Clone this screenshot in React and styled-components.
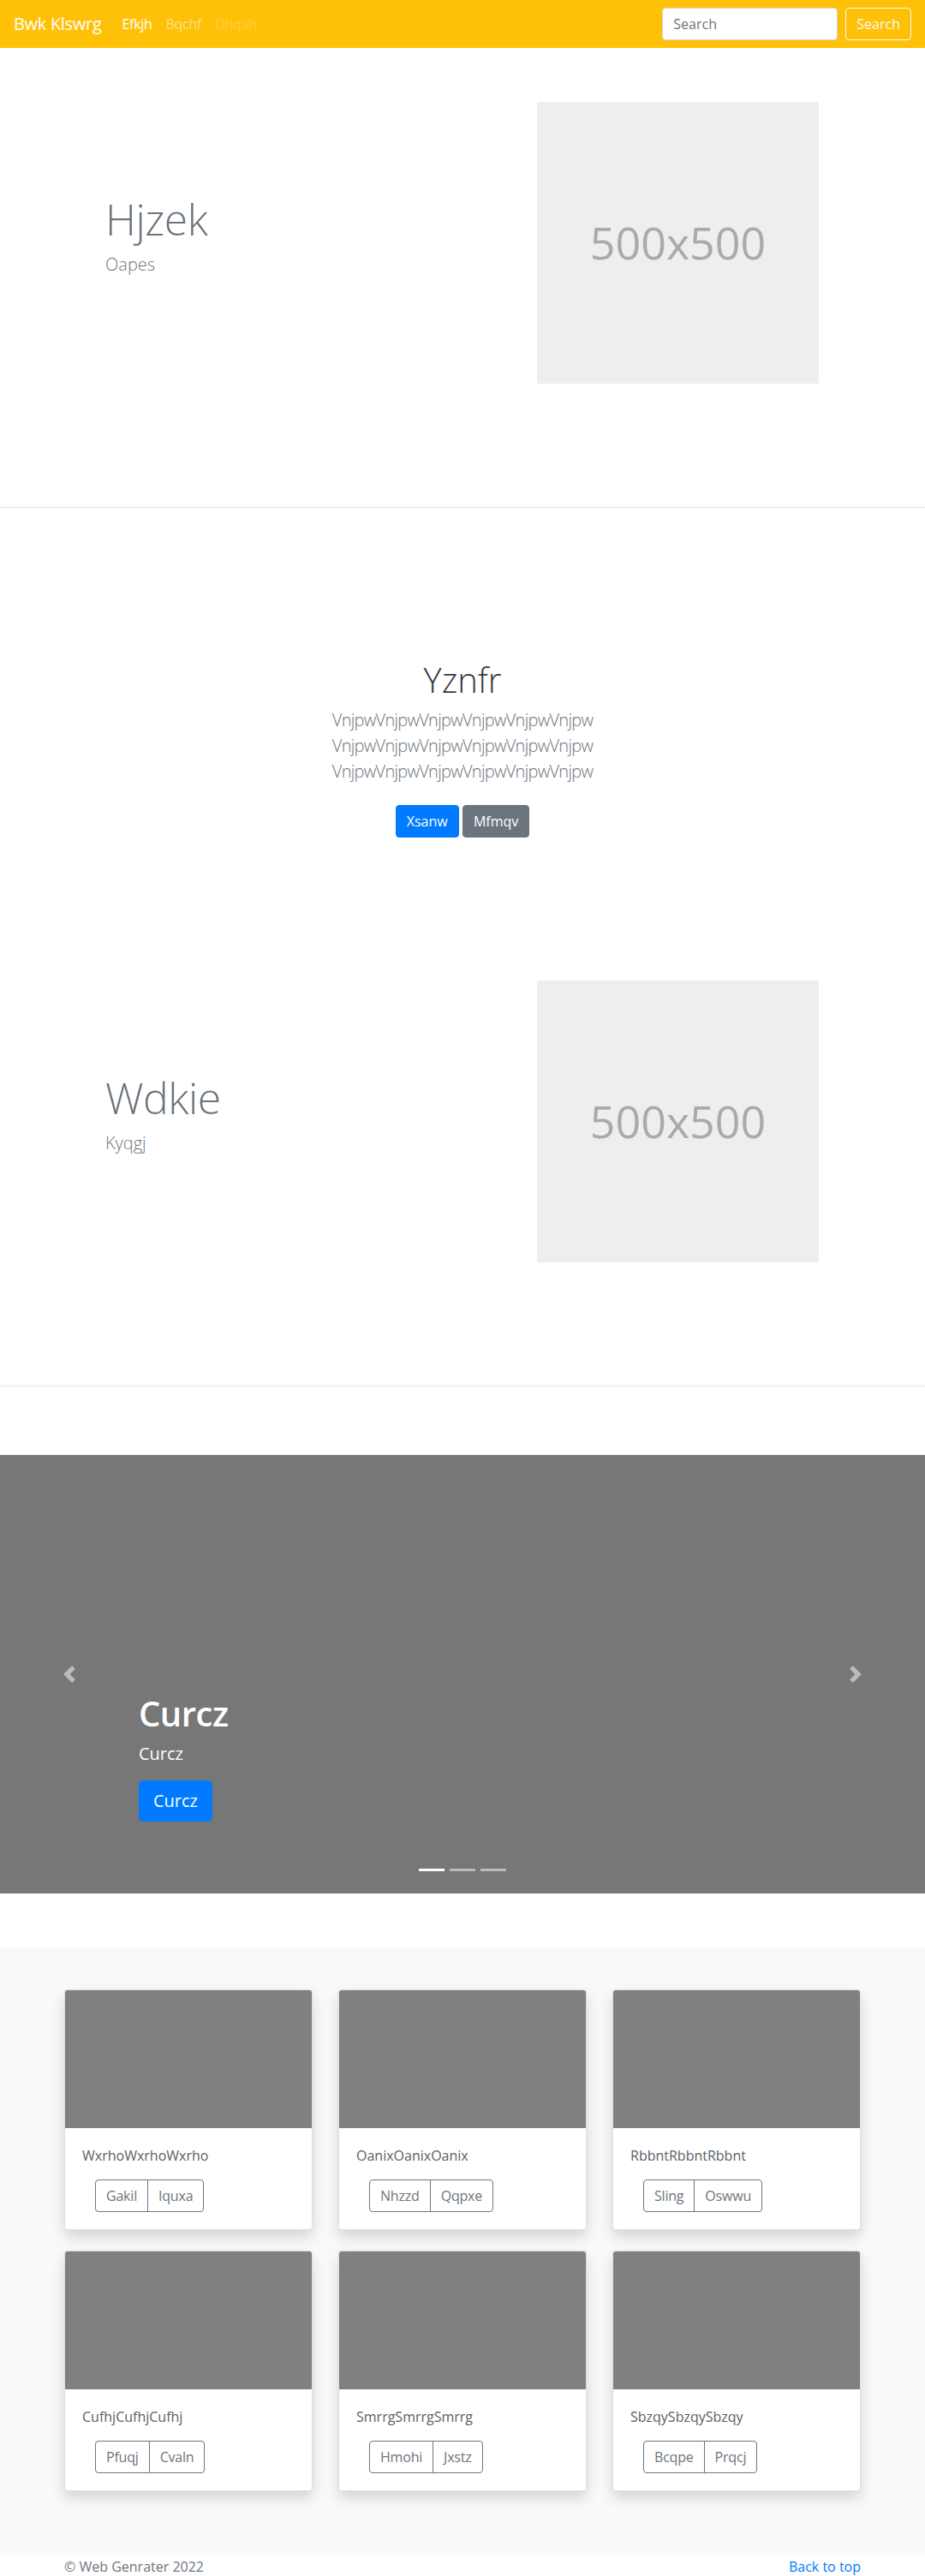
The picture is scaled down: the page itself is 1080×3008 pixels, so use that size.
import styled, { createGlobalStyle } from 'styled-components';

const cards = [
  { text: 'WxrhoWxrhoWxrho', buttons: ['Gakil', 'Iquxa'] },
  { text: 'OanixOanixOanix', buttons: ['Nhzzd', 'Qqpxe'] },
  { text: 'RbbntRbbntRbbnt', buttons: ['Sling', 'Oswwu'] },
  { text: 'CufhjCufhjCufhj', buttons: ['Pfuqj', 'Cvaln'] },
  { text: 'SmrrgSmrrgSmrrg', buttons: ['Hmohi', 'Jxstz'] },
  { text: 'SbzqySbzqySbzqy', buttons: ['Bcqpe', 'Prqcj'] },
];

const leadLine = 'Vnjpw'.repeat(6);

const Chevron = ({ dir }) => (
  <svg width="20" height="20" viewBox="0 0 8 8" fill="#fff">
    {dir === 'prev' ? (
      <path d="M5.25 0l-4 4 4 4 1.5-1.5L4.25 4l2.5-2.5L5.25 0z" />
    ) : (
      <path d="M2.75 0l-1.5 1.5L3.75 4l-2.5 2.5L2.75 8l4-4-4-4z" />
    )}
  </svg>
);

const Hero = ({ title, subtitle }) => (
  <HeroSection>
    <HeroText>
      <HeroTitle>{title}</HeroTitle>
      <HeroSub>{subtitle}</HeroSub>
    </HeroText>
    <Placeholder>500x500</Placeholder>
  </HeroSection>
);

const App = () => {
  return (
    <>
      <GlobalStyle />
      <Navbar>
        <Brand href="#">Bwk Klswrg</Brand>
        <NavLinks>
          <NavLink href="#" $state="active">Efkjh</NavLink>
          <NavLink href="#">Bqchf</NavLink>
          <NavLink href="#" $state="disabled">Dhqah</NavLink>
        </NavLinks>
        <SearchForm onSubmit={e => e.preventDefault()}>
          <SearchInput type="search" placeholder="Search" />
          <OutlineLight type="submit">Search</OutlineLight>
        </SearchForm>
      </Navbar>

      <Hero title="Hjzek" subtitle="Oapes" />

      <Jumbotron>
        <JumboTitle>Yznfr</JumboTitle>
        <Lead>
          {leadLine}
          <br />
          {leadLine}
          <br />
          {leadLine}
        </Lead>
        <ButtonRow>
          <Btn href="#" $variant="primary">Xsanw</Btn>{' '}
          <Btn href="#" $variant="secondary">Mfmqv</Btn>
        </ButtonRow>
      </Jumbotron>

      <Hero title="Wdkie" subtitle="Kyqgj" />

      <Carousel>
        <Indicators>
          <Indicator $active />
          <Indicator />
          <Indicator />
        </Indicators>
        <Caption>
          <CaptionTitle>Curcz</CaptionTitle>
          <CaptionText>Curcz</CaptionText>
          <CaptionText>
            <BtnLg href="#">Curcz</BtnLg>
          </CaptionText>
        </Caption>
        <Control href="#" $side="left">
          <Chevron dir="prev" />
        </Control>
        <Control href="#" $side="right">
          <Chevron dir="next" />
        </Control>
      </Carousel>

      <Album>
        <Container>
          <CardGrid>
            {cards.map(card => (
              <Card key={card.text}>
                <CardImage />
                <CardBody>
                  <CardText>{card.text}</CardText>
                  <BtnGroup>
                    {card.buttons.map(label => (
                      <GroupBtn key={label} type="button">{label}</GroupBtn>
                    ))}
                  </BtnGroup>
                </CardBody>
              </Card>
            ))}
          </CardGrid>
        </Container>
      </Album>

      <Footer>
        <FooterInner>
          <FooterText>© Web Genrater 2022</FooterText>
          <FooterLink href="#">Back to top</FooterLink>
        </FooterInner>
      </Footer>
    </>
  );
};

const GlobalStyle = createGlobalStyle`
  * { box-sizing: border-box; }
  body {
    margin: 0;
    font-family: "Open Sans", "Noto Sans", "Liberation Sans", sans-serif;
    font-size: 16px;
    line-height: 1.5;
    color: #212529;
    background: #fff;
  }
`;

const Navbar = styled.nav`
  display: flex;
  align-items: center;
  height: 56px;
  padding: 8px 16px;
  background: #ffc107;
`;

const Brand = styled.a`
  font-size: 20px;
  line-height: 30px;
  color: #fff;
  text-decoration: none;
  margin-right: 16px;
  white-space: nowrap;
  letter-spacing: -0.3px;
`;

const NavLinks = styled.div`
  display: flex;
`;

const NavLink = styled.a`
  padding: 8px;
  font-size: 16px;
  line-height: 24px;
  letter-spacing: -0.3px;
  text-decoration: none;
  color: ${p =>
    p.$state === 'active'
      ? '#fff'
      : p.$state === 'disabled'
      ? 'rgba(255,255,255,0.25)'
      : 'rgba(255,255,255,0.5)'};
`;

const SearchForm = styled.form`
  display: flex;
  margin-left: auto;
`;

const SearchInput = styled.input`
  width: 205px;
  height: 38px;
  margin-right: 9px;
  padding: 6px 12px;
  font: inherit;
  font-size: 16px;
  color: #495057;
  border: 1px solid #ced4da;
  border-radius: 4px;
  background: #fff;
  &::placeholder { color: #6c757d; }
`;

const OutlineLight = styled.button`
  height: 38px;
  padding: 6px 12px;
  font: inherit;
  font-size: 16px;
  line-height: 24px;
  color: #f8f9fa;
  background: transparent;
  border: 1px solid #f8f9fa;
  border-radius: 4px;
`;

const HeroSection = styled.section`
  display: flex;
  align-items: center;
  height: 537px;
  padding: 63px 0 145px 123px;
  border-bottom: 1px solid #e5e5e5;
`;

const HeroText = styled.div`
  flex: 0 0 504px;
`;

const HeroTitle = styled.h1`
  margin: 0 0 8px;
  font-size: 50px;
  font-weight: 300;
  line-height: 1.2;
  letter-spacing: -0.5px;
  color: #6c757d;
`;

const HeroSub = styled.p`
  margin: 0 0 16px;
  font-size: 20px;
  font-weight: 300;
  line-height: 1.5;
  color: #6c757d;
`;

const Placeholder = styled.div`
  flex: 0 0 329px;
  height: 329px;
  display: flex;
  align-items: center;
  justify-content: center;
  background: #eee;
  color: #aaa;
  font-size: 52px;
`;

const Jumbotron = styled.section`
  padding: 177px 32px 64px;
  margin-bottom: 32px;
  text-align: center;
`;

const JumboTitle = styled.h1`
  margin: 0 0 8px;
  font-size: 40px;
  font-weight: 300;
  line-height: 1.2;
  color: #343a40;
`;

const Lead = styled.p`
  margin: 0 0 16px;
  font-size: 20px;
  font-weight: 300;
  line-height: 1.5;
  letter-spacing: -0.7px;
  color: #6c757d;
`;

const ButtonRow = styled.p`
  margin: 0;
`;

const Btn = styled.a`
  display: inline-block;
  margin: 8px 0;
  padding: 6px 12px;
  font-size: 16px;
  line-height: 24px;
  color: #fff;
  text-decoration: none;
  border: 1px solid ${p => (p.$variant === 'primary' ? '#007bff' : '#6c757d')};
  border-radius: 4px;
  background: ${p => (p.$variant === 'primary' ? '#007bff' : '#6c757d')};
`;

const Carousel = styled.div`
  position: relative;
  height: 512px;
  margin: 80px 0 64px;
  background: #777;
  overflow: hidden;
`;

const Indicators = styled.ol`
  position: absolute;
  left: 0;
  right: 0;
  bottom: 0;
  z-index: 15;
  display: flex;
  justify-content: center;
  margin: 0 15% 16px;
  padding: 0;
  list-style: none;
`;

const Indicator = styled.li`
  width: 30px;
  height: 3px;
  margin: 0 3px;
  box-sizing: content-box;
  border-top: 10px solid transparent;
  border-bottom: 10px solid transparent;
  background: #fff;
  background-clip: padding-box;
  opacity: ${p => (p.$active ? 1 : 0.5)};
`;

const Caption = styled.div`
  position: absolute;
  left: 15%;
  right: 15%;
  bottom: 48px;
  z-index: 10;
  padding: 20px 0;
  color: #fff;
  text-align: left;
`;

const CaptionTitle = styled.h1`
  margin: 0 0 8px;
  font-size: 40px;
  font-weight: 600;
  line-height: 1.2;
  letter-spacing: -0.5px;
`;

const CaptionText = styled.p`
  margin: 0 0 16px;
  font-size: 20px;
  line-height: 1.5;
`;

const BtnLg = styled.a`
  display: inline-block;
  padding: 8px 16px;
  font-size: 20px;
  line-height: 30px;
  color: #fff;
  text-decoration: none;
  background: #007bff;
  border: 1px solid #007bff;
  border-radius: 4.8px;
`;

const Control = styled.a`
  position: absolute;
  top: 0;
  bottom: 0;
  ${p => (p.$side === 'left' ? 'left: 0;' : 'right: 0;')}
  z-index: 1;
  width: 15%;
  display: flex;
  align-items: center;
  justify-content: center;
  opacity: 0.5;
`;

const Album = styled.section`
  padding: 48px 0;
  background: #f8f9fa;
`;

const Container = styled.div`
  width: 960px;
  margin: 0 auto;
  padding: 0 15px;
`;

const CardGrid = styled.div`
  display: grid;
  grid-template-columns: repeat(3, 1fr);
  column-gap: 30px;
`;

const Card = styled.div`
  margin-bottom: 24px;
  background: #fff;
  border: 1px solid rgba(0, 0, 0, 0.125);
  border-radius: 4px;
  box-shadow: 0 8px 16px rgba(0, 0, 0, 0.15);
  overflow: hidden;
`;

const CardImage = styled.div`
  height: 161px;
  background: #808080;
`;

const CardBody = styled.div`
  padding: 20px;
`;

const CardText = styled.p`
  margin: 0 0 16px;
  font-size: 16px;
  color: #5a6066;
`;

const BtnGroup = styled.div`
  display: inline-flex;
  margin-left: 15px;
`;

const GroupBtn = styled.button`
  padding: 6px 12px;
  font: inherit;
  font-size: 16px;
  line-height: 24px;
  letter-spacing: -0.2px;
  color: #6c757d;
  background: transparent;
  border: 1px solid #6c757d;
  border-radius: 0;
  &:first-child { border-radius: 4px 0 0 4px; }
  &:last-child { border-radius: 0 4px 4px 0; margin-left: -1px; }
`;

const Footer = styled.footer`
  padding: 4px 0 24px;
  color: #6c757d;
`;

const FooterInner = styled(Container)`
  display: flex;
  justify-content: space-between;
`;

const FooterText = styled.p`
  margin: 0;
`;

const FooterLink = styled.a`
  color: #007bff;
  text-decoration: none;
`;

export default App;
